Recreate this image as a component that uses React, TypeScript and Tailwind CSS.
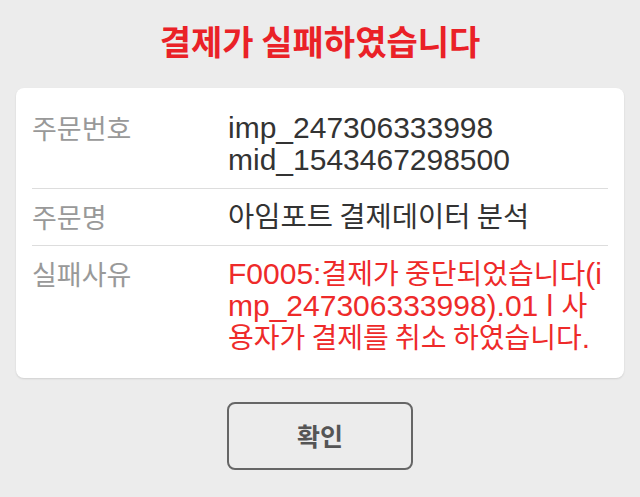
function K({ children, size = "text-[28px]" }: { children: React.ReactNode; size?: string }) {
  return (
    <span className={`${size} leading-none`} style={{ fontFamily: "'Noto Sans CJK KR', sans-serif" }}>
      {children}
    </span>
  );
}

export default function App() {
  const latin = { fontFamily: "'Liberation Sans', 'Noto Sans CJK KR', sans-serif" };
  const hangul = { fontFamily: "'Noto Sans CJK KR', sans-serif" };
  return (
    <div className="min-h-screen w-full bg-[#ececec] px-4 pt-5 pb-6" style={latin}>
      <h1 className="text-center text-[34px] leading-[42px] font-bold text-[#ea2127]" style={hangul}>
        결제가 실패하였습니다
      </h1>
      <div className="mt-[26px] rounded-lg bg-white px-4 py-3 shadow-[0_1px_2px_rgba(0,0,0,0.12)]">
        {/* 주문번호 */}
        <div className="flex border-b border-[#dddddd] py-3 leading-8">
          <div className="w-[196px] shrink-0 text-[27px] text-[#999999]" style={hangul}>주문번호</div>
          <div className="text-[30px] text-[#333333]">
            <div>imp_247306333998</div>
            <div>mid_1543467298500</div>
          </div>
        </div>
        {/* 주문명 */}
        <div className="flex border-b border-[#dddddd] py-3 leading-8">
          <div className="w-[196px] shrink-0 text-[27px] text-[#999999]" style={hangul}>주문명</div>
          <div className="text-[30px] text-[#333333]">
            <K size="text-[28.5px]">아임포트 결제데이터 분석</K>
          </div>
        </div>
        {/* 실패사유 */}
        <div className="flex py-3 leading-8">
          <div className="w-[196px] shrink-0 text-[27px] text-[#999999]" style={hangul}>실패사유</div>
          <div className="min-w-0 flex-1 text-[30px] text-[#ee2a2a]">
            <div className="h-8 whitespace-nowrap">
              F0005:<K>결제가 중단되었습니다</K>(i
            </div>
            <div className="h-8 whitespace-nowrap">
              mp_247306333998).01 l <K>사</K>
            </div>
            <div className="h-8 whitespace-nowrap">
              <K>용자가 결제를 취소 하였습니다</K>.
            </div>
          </div>
        </div>
      </div>
      <div className="mt-6 flex justify-center">
        <button
          className="h-[68px] w-[186px] rounded-lg border-2 border-[#666666] text-[25px] font-bold text-[#555555]"
          style={hangul}
        >
          확인
        </button>
      </div>
    </div>
  );
}
